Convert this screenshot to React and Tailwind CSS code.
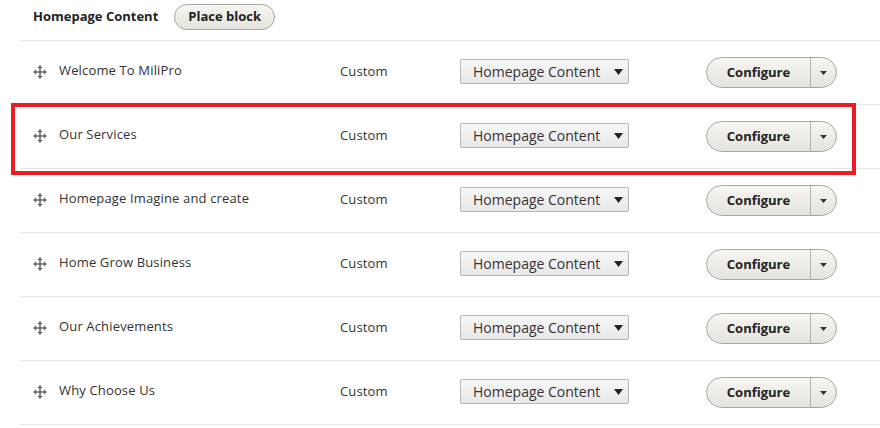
import React from "react";

const blocks = [
  "Welcome To MiliPro",
  "Our Services",
  "Homepage Imagine and create",
  "Home Grow Business",
  "Our Achievements",
  "Why Choose Us",
];

const DragIcon = () => (
  <svg width="14" height="14" viewBox="0 0 14 14" className="shrink-0">
    <path d="M7 1.5v11M1.5 7h11" stroke="#666" strokeWidth="1.6" />
    <path d="M7 0L4.6 3h4.8zM7 14l-2.4-3h4.8zM0 7l3-2.4v4.8zM14 7l-3-2.4v4.8z" fill="#666" />
  </svg>
);

const Row = ({ label }) => (
  <div className="flex h-[64px] items-center border-t border-[#e6e6e6] pb-[2px]">
    <div className="flex w-[320px] items-center pl-[13px]">
      <DragIcon />
      <span className="ml-[12px] -mt-[2px] text-[13px] tracking-[0.15px] text-[#333]">{label}</span>
    </div>
    <span className="w-[120px] text-[13px] tracking-[0.15px] text-[#333]">Custom</span>
    <div className="flex h-[25px] w-[169px] items-center justify-between rounded-[2px] border border-[#b5b5b5] bg-gradient-to-b from-[#f7f7f7] to-[#e8e8e8] pl-[12px] pr-[5px]">
      <span className="text-[14px] text-[#333]">Homepage Content</span>
      <svg width="9" height="6" viewBox="0 0 9 6"><path d="M0 0h9L4.5 6z" fill="#222" /></svg>
    </div>
    <div className="ml-[77px] mt-[2px] flex h-[31px] w-[131px] items-stretch rounded-full border border-[#a6a6a6] bg-gradient-to-b from-[#f6f5f0] to-[#e4e3dd]">
      <span className="flex w-[104px] items-center justify-center border-r border-[#b3b3b3] text-[13px] font-bold text-[#222]">
        Configure
      </span>
      <span className="flex flex-1 items-center justify-center">
        <svg width="7" height="4" viewBox="0 0 7 4"><path d="M0 0h7L3.5 4z" fill="#333" /></svg>
      </span>
    </div>
  </div>
);

export default function App() {
  return (
    <div className="relative h-[428px] w-[880px] overflow-hidden bg-white font-['Open_Sans',sans-serif]">
      <div className="pl-[20px]">
        <div className="flex h-[40px] items-center pb-[7px] pl-[13px]">
          <span className="text-[13px] font-bold text-[#222]">Homepage Content</span>
          <button className="ml-[16px] h-[26px] rounded-full border border-[#a6a6a6] bg-gradient-to-b from-[#f6f5f0] to-[#e4e3dd] px-[13px] text-[13px] font-bold text-[#222]">
            Place block
          </button>
        </div>
        <div className="border-b border-[#e6e6e6]">
          {blocks.map((b) => (
            <Row key={b} label={b} />
          ))}
        </div>
      </div>
      <div className="pointer-events-none absolute left-[11px] top-[103px] h-[72px] w-[845px] border-[4px] border-[#ec1c24]" />
    </div>
  );
}
